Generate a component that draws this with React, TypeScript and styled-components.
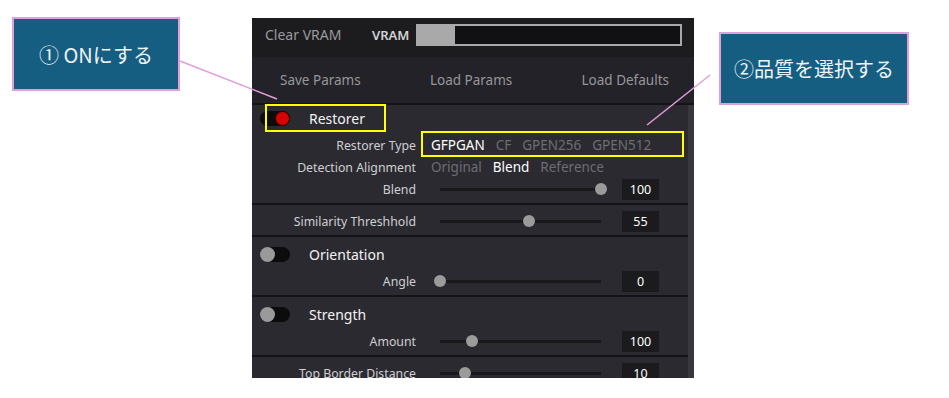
import React from "react";
import styled, { createGlobalStyle } from "styled-components";

const GlobalStyle = createGlobalStyle`
  html, body {
    margin: 0;
    padding: 0;
    background: #ffffff;
  }
  body {
    font-family: "Noto Sans", "Noto Sans CJK JP", sans-serif;
  }
`;

const Page = styled.div`
  position: relative;
  width: 949px;
  height: 398px;
  box-sizing: border-box;
  padding: 18px 0 0 252px;
  overflow: hidden;
  background: #ffffff;
`;

const Panel = styled.div`
  width: 442px;
  height: 360px;
  overflow: hidden;
  display: flex;
  flex-direction: column;
  background: #2b2a30;
  font-family: "Noto Sans", sans-serif;
`;

const TopBar = styled.div`
  flex: none;
  height: 39px;
  box-sizing: border-box;
  display: flex;
  align-items: center;
  padding: 0 0 6px 13px;
  background: #1c1c1f;
`;

const ClearButton = styled.span`
  width: 107px;
  font-size: 14px;
  color: #9a9a9e;
`;

const VramLabel = styled.span`
  width: 44px;
  font-size: 13px;
  font-weight: 600;
  color: #d2d2d5;
`;

const VramBar = styled.div`
  width: 266px;
  height: 22px;
  box-sizing: border-box;
  display: flex;
  border: 2px solid #a9a9a9;
  background: #111113;
`;

const VramFill = styled.div`
  height: 100%;
  background: #a9a9a9;
`;

const ButtonRow = styled.div`
  flex: none;
  height: 46px;
  display: flex;
  align-items: center;
  justify-content: space-between;
  padding: 0 25px 0 28px;
  background: #232228;
  border-bottom: 2px solid #141416;
`;

const TextButton = styled.span`
  font-size: 13.5px;
  color: #97979b;
`;

const Body = styled.div`
  flex: 1;
  min-height: 0;
  display: flex;
`;

const Content = styled.div`
  flex: 1;
  display: flex;
  flex-direction: column;
`;

const ScrollTrack = styled.div`
  flex: none;
  width: 6px;
  background: #38373d;
`;

const Section = styled.div<{ $top: number }>`
  flex: none;
  display: flex;
  flex-direction: column;
  padding: ${(p) => p.$top}px 0 3px;
  border-bottom: 2px solid #141416;
`;

const Header = styled.div`
  height: 24px;
  display: flex;
  align-items: center;
  gap: 19px;
  padding-left: 8px;
  margin-bottom: 4px;
`;

const Toggle = styled.div<{ $on: boolean }>`
  position: relative;
  width: 30px;
  height: 15px;
  border-radius: 8px;
  background: #0c0c0d;
  &::after {
    content: "";
    position: absolute;
    top: 0;
    left: ${(p) => (p.$on ? "15px" : "0")};
    width: 15px;
    height: 15px;
    box-sizing: border-box;
    border-radius: 50%;
    background: ${(p) => (p.$on ? "#d90000" : "#9a9a9a")};
    border: ${(p) => (p.$on ? "1px solid #2a0000" : "none")};
  }
`;

const HeaderTitle = styled.span`
  font-size: 14px;
  color: #f2f2f4;
`;

const Row = styled.div`
  height: 22px;
  display: flex;
  align-items: center;
`;

const Label = styled.span`
  flex: none;
  width: 164px;
  text-align: right;
  font-size: 12.3px;
  color: #cfcfd2;
  white-space: nowrap;
`;

const Options = styled.div`
  display: flex;
  gap: 11px;
  margin-left: 15px;
`;

const Option = styled.span<{ $active?: boolean }>`
  font-size: 13.5px;
  color: ${(p) => (p.$active ? "#ffffff" : "#6d6d72")};
`;

const Slider = styled.div`
  position: relative;
  flex: none;
  width: 173px;
  height: 22px;
  margin-left: 18px;
`;

const Track = styled.div`
  position: absolute;
  left: 6px;
  right: 6px;
  top: 10px;
  height: 3px;
  background: #19191b;
`;

const Thumb = styled.div`
  position: absolute;
  top: 5px;
  width: 12px;
  height: 12px;
  margin-left: -6px;
  border-radius: 50%;
  background: #9b9b9b;
`;

const ValueBox = styled.div`
  flex: none;
  width: 37px;
  height: 21px;
  margin-left: 15px;
  display: flex;
  align-items: center;
  justify-content: center;
  background: #1b1b1e;
  font-size: 12.5px;
  color: #ffffff;
`;

const Callout = styled.div<{ $x: number; $y: number; $w: number; $h: number }>`
  position: absolute;
  left: ${(p) => p.$x}px;
  top: ${(p) => p.$y}px;
  width: ${(p) => p.$w}px;
  height: ${(p) => p.$h}px;
  box-sizing: border-box;
  display: flex;
  align-items: center;
  justify-content: center;
  border: 2px solid #e1a0dc;
  background: #165e81;
  color: #eef3f6;
  font-family: "Noto Sans CJK JP", "Noto Sans", sans-serif;
  font-size: 20px;
  white-space: nowrap;
`;

const Highlight = styled.div<{ $x: number; $y: number; $w: number; $h: number }>`
  position: absolute;
  left: ${(p) => p.$x}px;
  top: ${(p) => p.$y}px;
  width: ${(p) => p.$w}px;
  height: ${(p) => p.$h}px;
  box-sizing: border-box;
  border: 2px solid #ffff00;
`;

const Leaders = styled.svg`
  position: absolute;
  left: 0;
  top: 0;
  pointer-events: none;
`;

function SliderRow({ label, value, pct }: { label: string; value: string; pct: number }) {
  return (
    <Row>
      <Label>{label}</Label>
      <Slider>
        <Track />
        <Thumb style={{ left: `${6 + pct * 161}px` }} />
      </Slider>
      <ValueBox>{value}</ValueBox>
    </Row>
  );
}

function OptionRow({ label, options, active }: { label: string; options: string[]; active: string }) {
  return (
    <Row>
      <Label>{label}</Label>
      <Options>
        {options.map((o) => (
          <Option key={o} $active={o === active}>
            {o}
          </Option>
        ))}
      </Options>
    </Row>
  );
}

export default function App() {
  return (
    <>
      <GlobalStyle />
      <Page>
        <Panel>
          <TopBar>
            <ClearButton>Clear VRAM</ClearButton>
            <VramLabel>VRAM</VramLabel>
            <VramBar>
              <VramFill style={{ width: "37px" }} />
            </VramBar>
          </TopBar>
          <ButtonRow>
            <TextButton>Save Params</TextButton>
            <TextButton>Load Params</TextButton>
            <TextButton>Load Defaults</TextButton>
          </ButtonRow>
          <Body>
            <Content>
              <Section $top={1}>
                <Header>
                  <Toggle $on />
                  <HeaderTitle>Restorer</HeaderTitle>
                </Header>
                <OptionRow
                  label="Restorer Type"
                  options={["GFPGAN", "CF", "GPEN256", "GPEN512"]}
                  active="GFPGAN"
                />
                <OptionRow
                  label="Detection Alignment"
                  options={["Original", "Blend", "Reference"]}
                  active="Blend"
                />
                <SliderRow label="Blend" value="100" pct={1} />
              </Section>
              <Section $top={5}>
                <SliderRow label="Similarity Threshhold" value="55" pct={0.55} />
              </Section>
              <Section $top={5}>
                <Header>
                  <Toggle $on={false} />
                  <HeaderTitle>Orientation</HeaderTitle>
                </Header>
                <SliderRow label="Angle" value="0" pct={0} />
              </Section>
              <Section $top={5}>
                <Header>
                  <Toggle $on={false} />
                  <HeaderTitle>Strength</HeaderTitle>
                </Header>
                <SliderRow label="Amount" value="100" pct={0.2} />
              </Section>
              <Section $top={5}>
                <SliderRow label="Top Border Distance" value="10" pct={0.155} />
              </Section>
            </Content>
            <ScrollTrack />
          </Body>
        </Panel>

        <Leaders width="949" height="398">
          <line x1="180" y1="61" x2="277" y2="99" stroke="#e39ddc" strokeWidth="1.5" />
          <line x1="710" y1="75" x2="647" y2="125" stroke="#e39ddc" strokeWidth="1.5" />
        </Leaders>
        <Highlight $x={265} $y={104} $w={121} $h={28} />
        <Highlight $x={421} $y={131} $w={263} $h={26} />
        <Callout $x={12} $y={17} $w={168} $h={74}>
          ① ONにする
        </Callout>
        <Callout $x={719} $y={32} $w={190} $h={73}>
          ②品質を選択する
        </Callout>
      </Page>
    </>
  );
}
